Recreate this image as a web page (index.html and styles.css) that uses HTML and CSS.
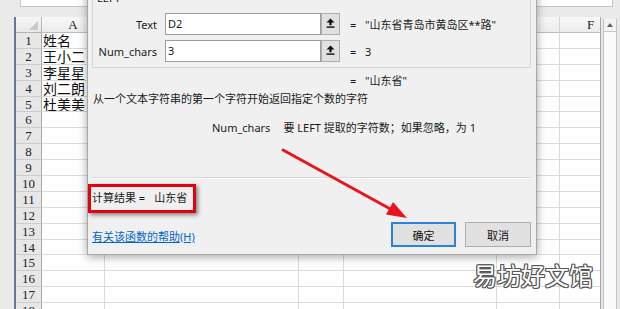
FILE: index.html
```html
<!DOCTYPE html>
<html lang="zh-CN">
<head>
<meta charset="utf-8">
<title>函数参数</title>
<link rel="stylesheet" href="styles.css">
</head>
<body>
<div class="app">
  <div class="toolbar"><div class="formula-box"></div></div>
  <div class="workarea">
    <div class="frame"></div>
    <div class="sheet">
      <div class="corner"></div><div class="ch">A</div><div class="ch"></div><div class="ch"></div><div class="ch"></div><div class="ch"></div><div class="ch">F</div>
      <div class="rh">1</div><div class="cell">姓名</div><div class="cell"></div><div class="cell"></div><div class="cell"></div><div class="cell"></div><div class="cell"></div>
      <div class="rh">2</div><div class="cell">王小二</div><div class="cell"></div><div class="cell"></div><div class="cell"></div><div class="cell"></div><div class="cell"></div>
      <div class="rh">3</div><div class="cell">李星星</div><div class="cell"></div><div class="cell"></div><div class="cell"></div><div class="cell"></div><div class="cell"></div>
      <div class="rh">4</div><div class="cell">刘二朗</div><div class="cell"></div><div class="cell"></div><div class="cell"></div><div class="cell"></div><div class="cell"></div>
      <div class="rh">5</div><div class="cell">杜美美</div><div class="cell"></div><div class="cell"></div><div class="cell"></div><div class="cell"></div><div class="cell"></div>
      <div class="rh">6</div><div class="cell"></div><div class="cell"></div><div class="cell"></div><div class="cell"></div><div class="cell"></div><div class="cell"></div>
      <div class="rh">7</div><div class="cell"></div><div class="cell"></div><div class="cell"></div><div class="cell"></div><div class="cell"></div><div class="cell"></div>
      <div class="rh">8</div><div class="cell"></div><div class="cell"></div><div class="cell"></div><div class="cell"></div><div class="cell"></div><div class="cell"></div>
      <div class="rh">9</div><div class="cell"></div><div class="cell"></div><div class="cell"></div><div class="cell"></div><div class="cell"></div><div class="cell"></div>
      <div class="rh">10</div><div class="cell"></div><div class="cell"></div><div class="cell"></div><div class="cell"></div><div class="cell"></div><div class="cell"></div>
      <div class="rh">11</div><div class="cell"></div><div class="cell"></div><div class="cell"></div><div class="cell"></div><div class="cell"></div><div class="cell"></div>
      <div class="rh">12</div><div class="cell"></div><div class="cell"></div><div class="cell"></div><div class="cell"></div><div class="cell"></div><div class="cell"></div>
      <div class="rh">13</div><div class="cell"></div><div class="cell"></div><div class="cell"></div><div class="cell"></div><div class="cell"></div><div class="cell"></div>
      <div class="rh">14</div><div class="cell"></div><div class="cell"></div><div class="cell"></div><div class="cell"></div><div class="cell"></div><div class="cell"></div>
      <div class="rh">15</div><div class="cell"></div><div class="cell"></div><div class="cell"></div><div class="cell"></div><div class="cell"></div><div class="cell"></div>
      <div class="rh">16</div><div class="cell"></div><div class="cell"></div><div class="cell"></div><div class="cell"></div><div class="cell"></div><div class="cell"></div>
      <div class="rh">17</div><div class="cell"></div><div class="cell"></div><div class="cell"></div><div class="cell"></div><div class="cell"></div><div class="cell"></div>
      <div class="rh">18</div><div class="cell"></div><div class="cell"></div><div class="cell"></div><div class="cell"></div><div class="cell"></div><div class="cell"></div>
    </div>
    <div class="vscroll">
      <div class="sb-up"><span class="sb-tri"></span></div>
    </div>
  </div>

  <div class="dialog">
    <fieldset class="args">
      <legend>LEFT</legend>
      <div class="arg">
        <span class="arg-label">Text</span>
        <span class="ref">D2</span>
        <span class="ref-btn"><svg width="9" height="10" viewBox="0 0 9 10"><path d="M4.5 0.5 L8.5 4.5 H5.6 V7.3 H3.4 V4.5 H0.5 Z" fill="#111"/><rect x="0.5" y="8.4" width="8" height="1.4" fill="#111"/></svg></span>
        <span class="eq">=</span>
        <span class="val">"山东省青岛市黄岛区**路"</span>
      </div>
      <div class="arg">
        <span class="arg-label">Num_chars</span>
        <span class="ref">3</span>
        <span class="ref-btn"><svg width="9" height="10" viewBox="0 0 9 10"><path d="M4.5 0.5 L8.5 4.5 H5.6 V7.3 H3.4 V4.5 H0.5 Z" fill="#111"/><rect x="0.5" y="8.4" width="8" height="1.4" fill="#111"/></svg></span>
        <span class="eq">=</span>
        <span class="val">3</span>
      </div>
    </fieldset>
    <div class="formula-result"><span class="eq">=</span><span class="val">"山东省"</span></div>
    <p class="desc">从一个文本字符串的第一个字符开始返回指定个数的字符</p>
    <p class="arg-desc"><span class="arg-name">Num_chars</span>要 LEFT 提取的字符数；如果忽略，为 1</p>
    <div class="sep"></div>
    <div class="total">计算结果 =<span class="total-val">山东省</span></div>
    <div class="footer">
      <a class="help">有关该函数的帮助(H)</a>
      <div class="buttons">
        <button class="btn primary">确定</button>
        <button class="btn">取消</button>
      </div>
    </div>
  </div>

  <div class="mark-box"></div>
  <svg class="arrow" width="620" height="309" viewBox="0 0 620 309">
    <line x1="283" y1="150" x2="394" y2="211" stroke="#e8161c" stroke-width="3" stroke-linecap="round"/>
    <polygon points="407,218 386,214.5 393,202" fill="#e8161c"/>
  </svg>
  <div class="watermark">易坊好文馆</div>
</div>
</body>
</html>
```

FILE: styles.css
```css
* { box-sizing: border-box; }
body {
  margin: 0;
  background: #eaeaea;
  font-family: "Noto Sans", "Noto Sans CJK SC", sans-serif;
}
.app {
  position: relative;
  width: 620px;
  height: 309px;
  overflow: hidden;
  background: #eaeaea;
}
.toolbar { height: 17px; padding-left: 20px; }
.formula-box {
  width: 593px;
  height: 7px;
  background: #fff;
  border: 1px solid #c6c6c6;
  border-top: 0;
}
.workarea {
  display: flex;
  height: 292px;
  padding-left: 14px;
}
.frame { width: 2px; background: #647a90; }
.sheet {
  width: 585px;
  display: grid;
  grid-template-columns: 26px 63px 194px 45px 153px 63px 62px;
  grid-template-rows: 16px;
  grid-auto-rows: 15.9px;
  align-content: start;
  overflow: hidden;
  border-right: 1px solid #a6a6a6;
  background: #fff;
}
.corner {
  background: linear-gradient(#f6f6f6, #e9e9e9);
  border-right: 1px solid #b5b5b5;
  border-bottom: 1px solid #b5b5b5;
  display: flex;
  justify-content: flex-end;
  align-items: flex-end;
  padding: 0 3px 2px 0;
}
.corner::after {
  content: "";
  width: 9px;
  height: 9px;
  background: #c9c9c9;
  clip-path: polygon(100% 0, 100% 100%, 0 100%);
}
.ch {
  background: linear-gradient(#f7f7f7, #ececec);
  border-right: 1px solid #d3d3d3;
  border-bottom: 1px solid #bdbdbd;
  font: 13px/15px "Liberation Serif", serif;
  color: #222;
  text-align: center;
}
.rh {
  background: #e7e7e7;
  border-right: 1px solid #a9a9a9;
  border-bottom: 1px solid #cdcdcd;
  font: 13px/15px "Liberation Serif", serif;
  color: #222;
  text-align: center;
}
.cell {
  border-right: 1px solid #dadada;
  border-bottom: 1px solid #dadada;
  font: 14px/14px "Noto Sans CJK SC", sans-serif;
  color: #111;
  padding-left: 1px;
  white-space: nowrap;
  overflow: hidden;
}
.vscroll {
  width: 14px;
  margin: 2px 0 0 2px;
  background: #fbfbfb;
  border-left: 1px solid #c2c2c2;
  border-right: 1px solid #c2c2c2;
}
.sb-up {
  height: 13px;
  border-bottom: 1px solid #c8c8c8;
  background: #f3f3f3;
  display: flex;
  align-items: center;
  justify-content: center;
}
.sb-tri {
  width: 0;
  height: 0;
  border-left: 3px solid transparent;
  border-right: 3px solid transparent;
  border-bottom: 4px solid #606060;
}

/* dialog */
.dialog {
  position: absolute;
  left: 87px;
  top: -28px;
  width: 450px;
  height: 283px;
  background: #f0f0f0;
  border: 1px solid #a8a8a8;
  box-shadow: 0 2px 9px rgba(0, 0, 0, 0.35);
  padding: 19px 5px 0 4px;
  font-size: 11px;
  color: #1a1a1a;
}
.args {
  margin: 0;
  min-width: 0;
  border: 1px solid #d5d5d5;
  padding: 9px 0 5px 0;
}
.args legend {
  padding: 0 2px;
  margin-left: 2px;
  line-height: 12px;
}
.arg {
  display: flex;
  align-items: center;
  height: 22px;
}
.arg + .arg { margin-top: 5px; }
.arg-label {
  width: 64px;
  margin-right: 8px;
  text-align: right;
}
.ref {
  width: 156px;
  height: 22px;
  background: #fff;
  border: 1px solid #9d9d9d;
  padding-left: 2px;
  line-height: 20px;
}
.ref-btn {
  width: 19px;
  height: 22px;
  background: #e1e1e1;
  border: 1px solid #adadad;
  display: flex;
  align-items: flex-start;
  justify-content: center;
  padding-top: 4px;
}
.eq { margin-left: 10px; width: 6px; }
.val { margin-left: 9px; }
.formula-result {
  margin-top: 6px;
  height: 14px;
  line-height: 14px;
  display: flex;
  padding-left: 248px;
}
.desc {
  margin: 4px 0 0;
  padding-left: 1px;
  height: 14px;
  line-height: 14px;
}
.arg-desc {
  margin: 15px 0 0;
  padding-left: 120px;
  height: 14px;
  line-height: 14px;
}
.arg-name { margin-right: 13px; }
.sep {
  margin-top: 42px;
  border-top: 1px solid #d7d7d7;
  border-bottom: 1px solid #fff;
}
.total {
  margin-top: 12px;
  height: 14px;
  line-height: 14px;
}
.total-val { margin-left: 9px; }
.footer {
  margin-top: 17px;
  display: flex;
  align-items: center;
}
.help {
  color: #0066cc;
  text-decoration: underline;
  margin-top: 2px;
}
.buttons {
  margin-left: auto;
  display: flex;
  gap: 9px;
}
.btn {
  width: 66px;
  height: 25px;
  background: #e1e1e1;
  border: 1px solid #adadad;
  font: 11px "Noto Sans", "Noto Sans CJK SC", sans-serif;
  color: #111;
  padding: 0;
}
.btn.primary {
  width: 65px;
  border: 2px solid #2f80da;
}

/* annotations */
.mark-box {
  position: absolute;
  left: 88px;
  top: 184px;
  width: 108px;
  height: 29px;
  border: 3px solid #e5000f;
  box-shadow: 2px 2px 4px rgba(0, 0, 0, 0.45);
}
.arrow {
  position: absolute;
  left: 0;
  top: 0;
  pointer-events: none;
}
.watermark {
  position: absolute;
  left: 473px;
  top: 261px;
  font: 24px/28px "Noto Sans CJK SC", sans-serif;
  color: #fff;
  text-shadow: 1px 0 0 #555, -1px 0 0 #555, 0 1px 0 #555, 0 -1px 0 #555,
    1px 1px 0 #555, -1px -1px 0 #555, 1px -1px 0 #555, -1px 1px 0 #555;
}
```
